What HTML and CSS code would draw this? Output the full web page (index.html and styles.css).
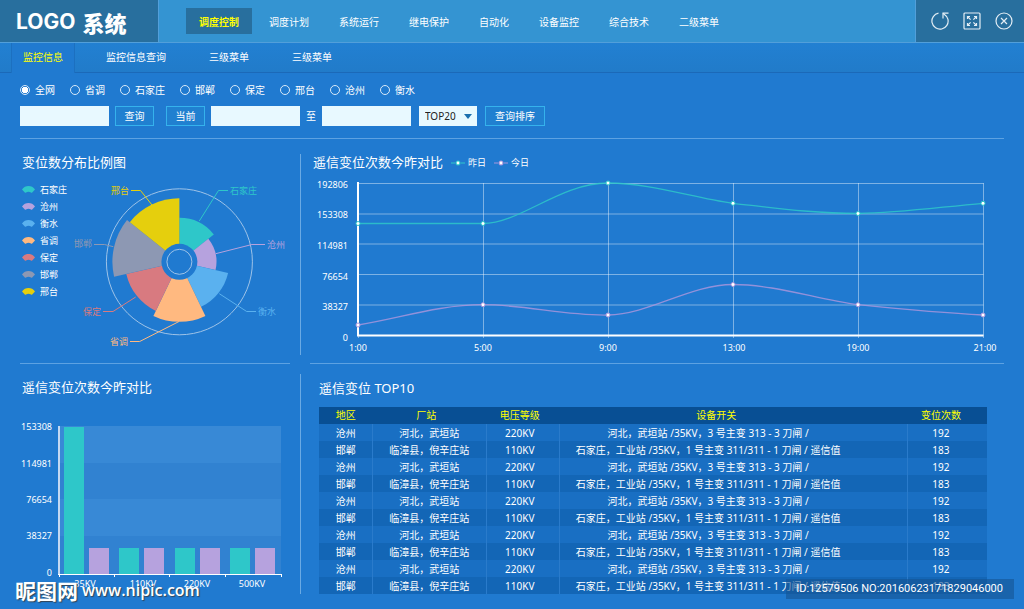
FILE: index.html
```html
<!DOCTYPE html>
<html lang="zh-CN">
<head>
<meta charset="utf-8">
<meta name="viewport" content="width=device-width, initial-scale=1">
<title>LOGO 系统</title>
<link rel="stylesheet" href="styles.css">
</head>
<body>
<div class="page">
  <header class="topbar">
    <h1 class="logo"><span class="logo-latin">LOGO</span><span class="logo-han">系统</span></h1>
    <nav class="main-nav">
      <a class="nav-link is-active" href="#">调度控制</a>
      <a class="nav-link" href="#">调度计划</a>
      <a class="nav-link" href="#">系统运行</a>
      <a class="nav-link" href="#">继电保护</a>
      <a class="nav-link" href="#">自动化</a>
      <a class="nav-link" href="#">设备监控</a>
      <a class="nav-link" href="#">综合技术</a>
      <a class="nav-link" href="#">二级菜单</a>
    </nav>
    <div class="tools">
      <button class="tool" type="button" aria-label="刷新">
        <svg viewBox="0 0 18 18"><path d="M7.5 1.1A8.1 8.1 0 1 0 16.9 7.2Q16 4 12 1.2"/><path d="M17.5 1.2H12V6.5"/></svg>
      </button>
      <button class="tool" type="button" aria-label="全屏">
        <svg viewBox="0 0 18 18"><rect x="1" y="1" width="16" height="16" rx="1"/><path d="M4.5 7V4.5H7M4.5 4.5L7.6 7.6M11 4.5H13.5V7M13.5 4.5L10.4 7.6M4.5 11V13.5H7M4.5 13.5L7.6 10.4M13.5 11V13.5H11M13.5 13.5L10.4 10.4"/></svg>
      </button>
      <button class="tool" type="button" aria-label="关闭">
        <svg viewBox="0 0 18 18"><circle cx="9" cy="9" r="8"/><path d="M6 6L12 12M12 6L6 12"/></svg>
      </button>
    </div>
  </header>

  <nav class="sub-nav">
    <a class="tab is-active" href="#">监控信息</a>
    <a class="tab" href="#">监控信息查询</a>
    <a class="tab" href="#">三级菜单</a>
    <a class="tab" href="#">三级菜单</a>
  </nav>

  <main>
    <form class="filters">
      <div class="radios">
        <label class="radio"><input type="radio" name="area" checked>全网</label>
        <label class="radio"><input type="radio" name="area">省调</label>
        <label class="radio"><input type="radio" name="area">石家庄</label>
        <label class="radio"><input type="radio" name="area">邯郸</label>
        <label class="radio"><input type="radio" name="area">保定</label>
        <label class="radio"><input type="radio" name="area">邢台</label>
        <label class="radio"><input type="radio" name="area">沧州</label>
        <label class="radio"><input type="radio" name="area">衡水</label>
      </div>
      <div class="fields">
        <div class="group">
          <input class="field" type="text" aria-label="查询内容">
          <button class="btn" type="button">查询</button>
        </div>
        <div class="group">
          <button class="btn" type="button">当前</button>
          <input class="field" type="text" aria-label="开始时间">
          <span class="to">至</span>
          <input class="field" type="text" aria-label="结束时间">
        </div>
        <div class="picker">
          <select class="select" aria-label="排名数量"><option>TOP20</option></select>
        </div>
        <button class="btn" type="button">查询排序</button>
      </div>
    </form>

    <div class="board">
      <section class="panel panel-top">
        <h2 class="title">变位数分布比例图</h2>
        <div class="pie-row">
          <ul class="pie-legend">
            <li class="c-teal"><svg viewBox="0 0 13 7"><use href="#fan"/></svg>石家庄</li>
            <li class="c-purple"><svg viewBox="0 0 13 7"><use href="#fan"/></svg>沧州</li>
            <li class="c-sky"><svg viewBox="0 0 13 7"><use href="#fan"/></svg>衡水</li>
            <li class="c-orange"><svg viewBox="0 0 13 7"><use href="#fan"/></svg>省调</li>
            <li class="c-red"><svg viewBox="0 0 13 7"><use href="#fan"/></svg>保定</li>
            <li class="c-gray"><svg viewBox="0 0 13 7"><use href="#fan"/></svg>邯郸</li>
            <li class="c-yellow"><svg viewBox="0 0 13 7"><defs><path id="fan" d="M0 3.6C1.5 1 4 0 6.5 0S11.5 1 13 3.6L10.2 6.4Q9.6 7 9 6.4Q6.5 5.2 4 6.4Q3.4 7 2.8 6.4Z"/></defs><use href="#fan"/></svg>邢台</li>
          </ul>
          <svg class="pie" viewBox="72 181 218 170" role="img" aria-label="变位数分布比例图">
            <g transform="translate(179.4 261.8)">
              <circle class="ring" r="73"/>
              <path class="c-teal" d="M0 0V-44A44 44 0 0 1 34.4 -27.4Z"/>
              <path class="c-purple" d="M0 0L28.9 -23.1A37 37 0 0 1 36.1 8.2Z"/>
              <path class="c-sky" d="M0 0L48.7 11.1A50 50 0 0 1 21.7 45Z"/>
              <path class="c-orange" d="M0 0L26 54.1A60 60 0 0 1 -26 54.1Z"/>
              <path class="c-red" d="M0 0L-23.6 49.1A54.5 54.5 0 0 1 -53.1 12.1Z"/>
              <path class="c-gray" d="M0 0L-65.3 14.9A67 67 0 0 1 -52.4 -41.8Z"/>
              <path class="c-yellow" d="M0 0L-49.6 -39.6A63.5 63.5 0 0 1 0 -63.5Z"/>
              <circle class="hole" r="18"/>
              <circle class="ring" r="12.5"/>
            </g>
            <g class="leader">
              <path class="c-teal" d="M199.3 221L218.5 190.5H228"/>
              <path class="c-purple" d="M215.7 253.7L252 244.5H265"/>
              <path class="c-sky" d="M219.3 293.7L246.7 311.5H256"/>
              <path class="c-orange" d="M179 321.5L139.7 341.5H130"/>
              <path class="c-red" d="M135.7 297L113 311.5H103"/>
              <path class="c-gray" d="M113.3 246.7L104.5 244.5H94"/>
              <path class="c-yellow" d="M152 205L140.5 190.5H131"/>
            </g>
            <text class="c-teal" x="230" y="194">石家庄</text>
            <text class="c-purple" x="267" y="248">沧州</text>
            <text class="c-sky" x="258" y="315">衡水</text>
            <text class="c-orange" x="110" y="345">省调</text>
            <text class="c-red" x="83" y="315">保定</text>
            <text class="c-gray" x="74" y="247">邯郸</text>
            <text class="c-yellow" x="111" y="194">邢台</text>
          </svg>
        </div>
      </section>

      <div class="rule"></div>

      <section class="panel panel-top">
        <div class="title-row">
          <h2 class="title">遥信变位次数今昨对比</h2>
          <span class="key"><svg class="c-teal" viewBox="0 0 14 6"><path d="M0 3H14"/><circle cx="7" cy="3" r="2.5"/><circle class="dot" cx="7" cy="3" r="1.4"/></svg>昨日</span>
          <span class="key"><svg class="c-pink" viewBox="0 0 14 6"><path d="M0 3H14"/><circle cx="7" cy="3" r="2.5"/><circle class="dot" cx="7" cy="3" r="1.4"/></svg>今日</span>
        </div>
        <svg class="chart" viewBox="310 176 694 180" role="img" aria-label="遥信变位次数今昨对比折线图">
          <path class="grid" d="M358 183.5H983.5M358 214H983.5M358 244H983.5M358 274.5H983.5M358 305H983.5M483.5 183V338M608.5 183V338M733.5 183V338M858.5 183V338M983.5 183V338M358.5 335V338"/>
          <path class="axis" d="M358 182V335.5H983.5"/>
          <path class="line c-teal" d="M358 223.5H483C520 223.5 560 183 608 183C650 183 690 197 733 203.3C775 208 815 213.5 858 213.5C900 213 940 207 983 203.3"/>
          <path class="line c-pink" d="M358 325C400 318 440 304.7 483 304.7C525 304.7 566 316 608 315C650 314 690 284.5 733 284.5C775 284.5 816 299 858 304.7C900 309 941 313 983 315"/>
          <g class="points c-teal"><circle cx="358" cy="223.5" r="2"/><circle cx="483" cy="223.5" r="2"/><circle cx="608" cy="183" r="2"/><circle cx="733" cy="203.3" r="2"/><circle cx="858" cy="213.5" r="2"/><circle cx="983" cy="203.3" r="2"/></g>
          <g class="points c-pink"><circle cx="358" cy="325" r="2"/><circle cx="483" cy="304.7" r="2"/><circle cx="608" cy="315" r="2"/><circle cx="733" cy="284.5" r="2"/><circle cx="858" cy="304.7" r="2"/><circle cx="983" cy="315" r="2"/></g>
          <g class="end">
            <text x="348" y="188">192806</text><text x="348" y="218">153308</text><text x="348" y="249">114981</text>
            <text x="348" y="280">76654</text><text x="348" y="310">38327</text><text x="348" y="341">0</text>
          </g>
          <g class="mid">
            <text x="358" y="351">1:00</text><text x="483" y="351">5:00</text><text x="608" y="351">9:00</text>
            <text x="734" y="351">13:00</text><text x="858" y="351">19:00</text><text x="985" y="351">21:00</text>
          </g>
        </svg>
      </section>

      <section class="panel panel-bottom">
        <h2 class="title">遥信变位次数今昨对比</h2>
        <svg class="chart bars" viewBox="20 416 270 180" role="img" aria-label="遥信变位次数今昨对比柱状图">
          <path class="band-a" d="M59 426H281V463H59ZM59 499H281V536H59Z"/>
          <path class="band-b" d="M59 463H281V499H59ZM59 536H281V574H59Z"/>
          <g class="c-teal"><rect x="64" y="427" width="20" height="147"/><rect x="119" y="548" width="20" height="26"/><rect x="175" y="548" width="20" height="26"/><rect x="230" y="548" width="20" height="26"/></g>
          <g class="c-purple"><rect x="89" y="548" width="20" height="26"/><rect x="144" y="548" width="20" height="26"/><rect x="200" y="548" width="20" height="26"/><rect x="255" y="548" width="20" height="26"/></g>
          <path class="y-axis" d="M59 426V575"/>
          <path class="axis-thin" d="M58 574.5H282M59.5 574V577M114.5 574V577M169.5 574V577M225.5 574V577M281.5 574V577"/>
          <g class="end">
            <text x="52" y="430">153308</text><text x="52" y="467">114981</text><text x="52" y="503">76654</text>
            <text x="52" y="539">38327</text><text x="52" y="576">0</text>
          </g>
          <g class="mid">
            <text x="85" y="587">35KV</text><text x="143" y="587">110KV</text><text x="197" y="587">220KV</text><text x="252" y="587">500KV</text>
          </g>
        </svg>
      </section>

      <div class="rule"></div>

      <section class="panel panel-bottom ranking">
        <h2 class="title">遥信变位 TOP10</h2>
        <table class="table">
          <colgroup><col class="w-area"><col class="w-station"><col class="w-level"><col class="w-device"><col class="w-count"></colgroup>
          <thead>
            <tr><th>地区</th><th>厂站</th><th>电压等级</th><th>设备开关</th><th>变位次数</th></tr>
          </thead>
          <tbody>
            <tr><td>沧州</td><td>河北，武垣站</td><td>220KV</td><td>河北，武垣站 /35KV，3 号主变 313 - 3 刀闸 /</td><td>192</td></tr>
            <tr><td>邯郸</td><td>临漳县，倪辛庄站</td><td>110KV</td><td>石家庄，工业站 /35KV，1 号主变 311/311 - 1 刀闸 / 遥信值</td><td>183</td></tr>
            <tr><td>沧州</td><td>河北，武垣站</td><td>220KV</td><td>河北，武垣站 /35KV，3 号主变 313 - 3 刀闸 /</td><td>192</td></tr>
            <tr><td>邯郸</td><td>临漳县，倪辛庄站</td><td>110KV</td><td>石家庄，工业站 /35KV，1 号主变 311/311 - 1 刀闸 / 遥信值</td><td>183</td></tr>
            <tr><td>沧州</td><td>河北，武垣站</td><td>220KV</td><td>河北，武垣站 /35KV，3 号主变 313 - 3 刀闸 /</td><td>192</td></tr>
            <tr><td>邯郸</td><td>临漳县，倪辛庄站</td><td>110KV</td><td>石家庄，工业站 /35KV，1 号主变 311/311 - 1 刀闸 / 遥信值</td><td>183</td></tr>
            <tr><td>沧州</td><td>河北，武垣站</td><td>220KV</td><td>河北，武垣站 /35KV，3 号主变 313 - 3 刀闸 /</td><td>192</td></tr>
            <tr><td>邯郸</td><td>临漳县，倪辛庄站</td><td>110KV</td><td>石家庄，工业站 /35KV，1 号主变 311/311 - 1 刀闸 / 遥信值</td><td>183</td></tr>
            <tr><td>沧州</td><td>河北，武垣站</td><td>220KV</td><td>河北，武垣站 /35KV，3 号主变 313 - 3 刀闸 /</td><td>192</td></tr>
            <tr><td>邯郸</td><td>临漳县，倪辛庄站</td><td>110KV</td><td>石家庄，工业站 /35KV，1 号主变 311/311 - 1 刀闸 / 遥信值</td><td>183</td></tr>
          </tbody>
        </table>
      </section>
    </div>
  </main>

  <div class="mark-site"><span class="mark-name">昵图网</span><span>www.nipic.com</span></div>
  <div class="mark-id">ID:12579506 NO:20160623171829046000</div>
</div>
</body>
</html>
```
FILE: styles.css
```css
* { box-sizing: border-box; }

body {
  margin: 0;
  background: #207ad0;
  color: #fff;
  font: 10px/16px "Noto Sans", "Noto Sans CJK SC", sans-serif;
}

a { color: inherit; text-decoration: none; }
button, input, select { font: inherit; color: inherit; margin: 0; }
h1, h2, ul { margin: 0; padding: 0; list-style: none; font-weight: 400; }
svg { display: block; }

.page { position: relative; min-height: 100vh; }

/* Top bar */
.topbar {
  display: flex;
  height: 43px;
  background: #3494d2;
  border-bottom: 1px solid #529fda;
}
.logo {
  display: flex;
  align-items: center;
  gap: 7px;
  width: 159px;
  padding: 2px 0 0 16px;
  background: #286f9e;
  border-right: 1px solid #529fda;
}
.logo-latin { font: 700 21px/24px Inter, sans-serif; }
.logo-han { font: 900 22px/24px "Noto Sans CJK SC", sans-serif; }
.main-nav {
  display: flex;
  flex: 1;
  align-items: center;
  gap: 4px;
  padding-left: 27px;
}
.nav-link { padding: 6px 13px 4px; white-space: nowrap; }
.nav-link.is-active { background: #286f9e; color: #ff0; font-weight: 700; }
.tools {
  display: flex;
  align-items: center;
  gap: 14px;
  padding: 0 11px 0 15px;
  background: #286f9e;
  border-left: 1px solid #529fda;
}
.tool { width: 18px; height: 18px; padding: 0; border: 0; background: none; cursor: pointer; }
.tool svg { width: 18px; height: 18px; fill: none; stroke: #e4eef5; stroke-width: 1.2; }

/* Second-level tabs */
.sub-nav {
  display: flex;
  gap: 21px;
  height: 30px;
  padding-left: 12px;
  background: linear-gradient(#2280d2, #217bc9);
  box-shadow: inset 0 -1px #1b69b8;
}
.tab { padding: 6px 11px 8px; }
.tab.is-active { background: #207ad0; color: #ff0; box-shadow: -1px 0 #1c70c0, 1px 0 #1c70c0; }

/* Filters */
.filters {
  display: grid;
  gap: 8px;
  margin: 0 20px;
  padding: 9px 0 12px;
  border-bottom: 1px solid #5da2e2;
}
.radios { display: flex; gap: 15px; }
.radio { display: flex; align-items: center; gap: 5px; }
.radio input {
  appearance: none;
  width: 10px;
  height: 10px;
  border: 1px solid #d8e9f8;
  border-radius: 50%;
}
.radio input:checked { background: radial-gradient(#fff 0 3px, transparent 3px); }
.fields, .group { display: flex; align-items: center; }
.group { gap: 6px; }
.field {
  width: 89px;
  height: 20px;
  padding: 0 4px;
  border: 0;
  background: #e8f9ff;
  color: #222;
}
.btn {
  height: 20px;
  padding: 0 9px;
  border: 1px solid #35b2ec;
  background: #2080d0;
  line-height: 18px;
  cursor: pointer;
}
.group .btn { width: 39px; padding: 0; }
.group + .group { margin-left: 12px; }
.picker { position: relative; margin: 0 8px; }
.picker::after {
  content: "";
  position: absolute;
  top: 8px;
  right: 5px;
  width: 8px;
  height: 5px;
  background: #1b6fae;
  clip-path: polygon(0 0, 100% 0, 50% 100%);
  pointer-events: none;
}
.select {
  appearance: none;
  display: block;
  width: 58px;
  height: 20px;
  padding: 0 0 0 6px;
  border: 0;
  border-radius: 0;
  background: #e8f9ff;
  color: #222;
}

/* Dashboard */
.board {
  display: grid;
  grid-template-columns: minmax(0, 270fr) 20px minmax(0, 694fr);
  padding: 1px 20px 0;
}
.panel-top { padding: 12px 0 7px; border-bottom: 1px solid #5da2e2; }
.panel-bottom { padding-top: 13px; }
.rule { width: 1px; margin: 14px 0 9px 10px; background: #6aaae4; }
.panel-bottom + .rule { margin: 10px 0 2px 10px; }
.title { padding-left: 2px; font-size: 13px; line-height: 20px; }
.title-row { display: flex; align-items: center; gap: 8px; padding-left: 1px; margin-bottom: 4px; }
.key { display: flex; align-items: center; gap: 3px; padding-top: 2px; font-size: 9px; }
.key svg { width: 14px; height: 6px; }
.key path { stroke: currentColor; stroke-dasharray: 4 6; }
.key .dot { fill: #fff; }

.pie-row { display: flex; margin-top: 9px; }
.pie-legend { width: 52px; padding-left: 2px; font-size: 9px; line-height: 17px; white-space: nowrap; }
.pie-legend li { display: flex; align-items: center; gap: 5px; }
.pie-legend svg { width: 13px; height: 7px; fill: var(--c); }
.pie { flex: 1; min-width: 0; font-size: 9px; }
.pie path { fill: var(--c); }
.pie text { fill: var(--c); }
.pie .ring { fill: none; stroke: #9ec3e8; }
.pie .hole { fill: #207ad0; }
.pie .leader path { fill: none; stroke: var(--c); }

.c-teal { --c: #2ec7c9; }
.c-purple { --c: #b6a2de; }
.c-sky { --c: #5ab1ef; }
.c-orange { --c: #ffb980; }
.c-red { --c: #d87a80; }
.c-gray { --c: #8d98b3; }
.c-yellow { --c: #e5cf0d; }
.c-pink { --c: #a795dc; }

.key svg, .chart { fill: var(--c); color: var(--c); }
.chart { width: 100%; height: auto; font-size: 9px; }
.chart text { fill: #fff; }
.chart .end { text-anchor: end; }
.chart .mid { text-anchor: middle; }
.chart .grid { fill: none; stroke: #fff; stroke-opacity: .42; }
.chart .axis { fill: none; stroke: #fff; stroke-width: 2; }
.chart .line { fill: none; stroke: var(--c); stroke-width: 1.3; stroke-opacity: .85; }
.chart .points { fill: #fff; stroke: var(--c); }

.bars { margin-top: 19px; }
.bars rect { fill: var(--c); }
.bars .band-a { fill: #3889d6; }
.bars .band-b { fill: #3182d1; }
.bars .y-axis { stroke: #c3d8f2; stroke-width: 2; }
.bars .axis-thin { fill: none; stroke: #fff; }

/* Ranking table */
.ranking { padding-left: 9px; padding-right: 17px; }
.ranking .title { padding-left: 0; margin: 1px 0 9px; }
.table { width: 100%; border-collapse: collapse; table-layout: fixed; line-height: 15px; text-align: center; }
.table th, .table td { height: 17px; padding: 2px 0 0; font-weight: 400; white-space: nowrap; }
.table th { padding: 1px 0; background: #084f94; color: #ff0; }
.table tbody tr { background: #196fc3; }
.table tbody tr:nth-child(even) { background: #1366b6; }
.table td + td { box-shadow: inset 1px 0 #2a7bcb; }
.table th:nth-child(2) { padding-right: 6px; }
.table th:nth-child(3), .table td:nth-child(3) { padding-right: 6px; }
.table th:nth-child(4) { padding-right: 34px; }
.table td:nth-child(4) { padding-right: 50px; }
.table th:nth-child(5), .table td:nth-child(5) { padding-right: 12px; }
.w-area { width: 8%; }
.w-station { width: 17%; }
.w-level { width: 11%; }
.w-device { width: 52%; }
.w-count { width: 12%; }

/* Marks laid over the page */
.mark-site {
  position: absolute;
  left: 15px;
  bottom: 6px;
  display: flex;
  align-items: center;
  gap: 4px;
  font: 600 16px/26px "Open Sans", sans-serif;
  text-shadow: 1px 1px 1px #345;
}
.mark-name { font: 700 21px/26px "Noto Sans CJK SC", sans-serif; }
.mark-id {
  position: absolute;
  right: 10px;
  bottom: 10px;
  padding: 0 11px 0 10px;
  background: rgba(22, 84, 146, .6);
  font: 11px/20px Roboto, sans-serif;
}
```
